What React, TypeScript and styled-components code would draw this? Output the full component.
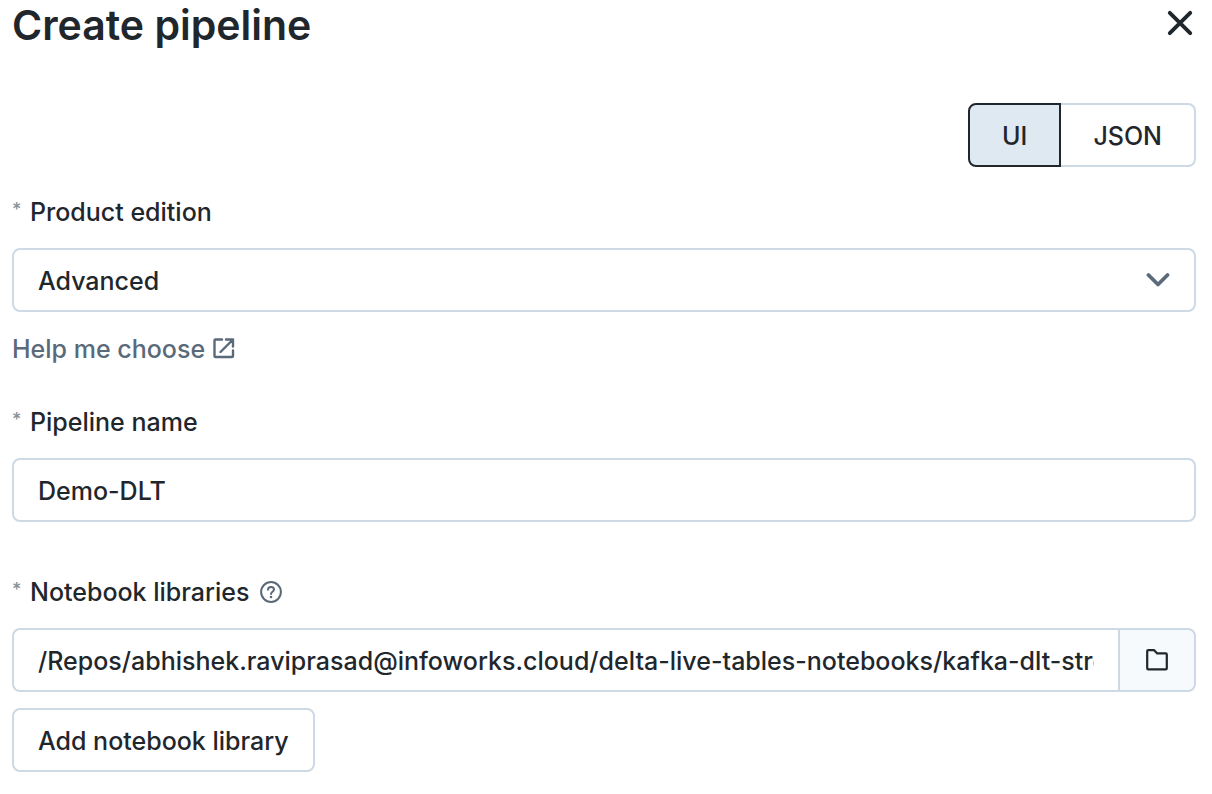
import React from "react";
import styled, { createGlobalStyle, css } from "styled-components";

const ink = "#1f272d";
const muted = "#5a6a7a";
const line = "#cddae5";

const GlobalStyle = createGlobalStyle`
  *, *::before, *::after { box-sizing: border-box; }
  body {
    margin: 0;
    background: #fff;
    color: ${ink};
    font: 500 25px/32px Inter, "Liberation Sans", sans-serif;
  }
  button, input, select { font: inherit; color: inherit; }
`;

const Dialog = styled.main`
  padding: 0 16px 22px 12px;
`;

const Header = styled.header`
  display: flex;
  align-items: flex-start;
  justify-content: space-between;
  height: 103px;
`;

const Title = styled.h1`
  margin: 0;
  font-size: 41px;
  font-weight: 600;
  line-height: 50px;
`;

const CloseButton = styled.button`
  display: flex;
  align-items: center;
  justify-content: center;
  width: 32px;
  height: 46px;
  padding: 0;
  border: 0;
  background: none;
  cursor: pointer;
`;

const Toggle = styled.div`
  display: flex;
  justify-content: flex-end;
  margin-bottom: 29px;
`;

const box = css`
  height: 64px;
  border: 2px solid ${line};
  border-radius: 8px;
  background: #fff;
`;

const ToggleButton = styled.button<{ $selected?: boolean }>`
  ${box}
  padding: 2px 32px 0;
  cursor: pointer;
  ${({ $selected }) =>
    $selected
      ? css`
          border-color: ${ink};
          border-radius: 8px 0 0 8px;
          background: #dfe9f2;
        `
      : css`
          border-left: 0;
          border-radius: 0 8px 8px 0;
        `}
`;

const Field = styled.div<{ $gap?: number }>`
  margin-bottom: ${({ $gap = 0 }) => $gap}px;
`;

const LabelRow = styled.div`
  display: flex;
  align-items: center;
  gap: 10px;
  margin-bottom: 20px;
`;

const Label = styled.label`
  display: flex;
  gap: 8px;
`;

const Required = styled.span`
  width: 10px;
  color: #858f98;
  font-size: 18px;
  line-height: 28px;
`;

const HelpButton = styled.button`
  display: flex;
  padding: 0;
  border: 0;
  background: none;
  color: ${muted};
  cursor: pointer;
`;

const SelectBox = styled.div`
  display: grid;
  align-items: center;

  > * { grid-area: 1 / 1; }
  > svg {
    justify-self: end;
    margin-right: 26px;
    color: ${muted};
    pointer-events: none;
  }
`;

const Select = styled.select`
  ${box}
  width: 100%;
  padding: 2px 24px 0;
  appearance: none;
`;

const HelpLink = styled.a`
  display: inline-flex;
  align-items: center;
  gap: 8px;
  margin-top: 21px;
  color: ${muted};
  text-decoration: none;
`;

const TextInput = styled.input`
  ${box}
  width: 100%;
  padding: 2px 24px 0;
`;

const PathRow = styled.div`
  display: flex;
  margin-bottom: 16px;

  ${TextInput} {
    flex: 1;
    min-width: 0;
    border-right: 0;
    border-radius: 8px 0 0 8px;
  }
`;

const BrowseButton = styled.button`
  ${box}
  display: flex;
  align-items: center;
  justify-content: center;
  width: 78px;
  padding: 0;
  border-radius: 0 8px 8px 0;
  background: #f6fafc;
  cursor: pointer;
`;

const AddButton = styled.button`
  ${box}
  padding: 2px 24px 0;
  cursor: pointer;
`;

const CloseIcon = () => (
  <svg width="26" height="26" viewBox="0 0 26 26" fill="none" stroke="currentColor" strokeWidth="3.9" strokeLinecap="round" aria-hidden="true">
    <path d="M2.8 2.8 23.2 23.2M23.2 2.8 2.8 23.2" />
  </svg>
);

const ChevronIcon = () => (
  <svg width="24" height="16" viewBox="0 0 24 16" fill="none" stroke="currentColor" strokeWidth="3.8" strokeLinecap="round" strokeLinejoin="round" aria-hidden="true">
    <path d="M2.5 3 12 12.5 21.5 3" />
  </svg>
);

const ExternalIcon = () => (
  <svg width="22" height="22" viewBox="0 0 22 22" fill="none" stroke="currentColor" strokeWidth="2.4" strokeLinecap="round" strokeLinejoin="round" aria-hidden="true">
    <path d="M9 1.5H2.6Q1.5 1.5 1.5 2.6V17.9Q1.5 19 2.6 19H18.9Q20 19 20 17.9V12.5M13 1.5H20V8.5M20 1.5 7.5 14" />
  </svg>
);

const HelpIcon = () => (
  <svg width="22" height="22" viewBox="0 0 22 22" fill="none" stroke="currentColor" strokeWidth="2" strokeLinecap="round" strokeLinejoin="round" aria-hidden="true">
    <circle cx="11" cy="11" r="9.9" />
    <path d="M8 8.8C8 6.9 9.3 5.9 11 5.9S14 7 14 8.6C14 10.7 11 10.8 11 13" />
    <circle cx="11" cy="16" r="1.3" fill="currentColor" stroke="none" />
  </svg>
);

const FolderIcon = () => (
  <svg width="22" height="22" viewBox="0 0 22 22" fill="none" stroke="currentColor" strokeWidth="2.2" strokeLinejoin="round" aria-hidden="true">
    <path d="M1.2 2.2Q1.2 1.2 2.2 1.2H8.2L11.2 4.4H19.8Q20.8 4.4 20.8 5.4V19.2Q20.8 20.4 19.8 20.4H2.2Q1.2 20.4 1.2 19.2Z" />
  </svg>
);

export default function App() {
  return (
    <>
      <GlobalStyle />
      <Dialog>
        <Header>
          <Title>Create pipeline</Title>
          <CloseButton type="button" aria-label="Close">
            <CloseIcon />
          </CloseButton>
        </Header>

        <Toggle role="group" aria-label="Editor mode">
          <ToggleButton type="button" $selected aria-pressed="true">UI</ToggleButton>
          <ToggleButton type="button" aria-pressed="false">JSON</ToggleButton>
        </Toggle>

        <Field $gap={41}>
          <LabelRow>
            <Label htmlFor="edition"><Required>*</Required>Product edition</Label>
          </LabelRow>
          <SelectBox>
            <Select id="edition" defaultValue="Advanced">
              <option>Advanced</option>
            </Select>
            <ChevronIcon />
          </SelectBox>
          <HelpLink href="#editions">Help me choose<ExternalIcon /></HelpLink>
        </Field>

        <Field $gap={54}>
          <LabelRow>
            <Label htmlFor="name"><Required>*</Required>Pipeline name</Label>
          </LabelRow>
          <TextInput id="name" defaultValue="Demo-DLT" />
        </Field>

        <Field>
          <LabelRow>
            <Label htmlFor="library"><Required>*</Required>Notebook libraries</Label>
            <HelpButton type="button" aria-label="About notebook libraries"><HelpIcon /></HelpButton>
          </LabelRow>
          <PathRow>
            <TextInput
              id="library"
              defaultValue="/Repos/abhishek.raviprasad@infoworks.cloud/delta-live-tables-notebooks/kafka-dlt-streaming"
            />
            <BrowseButton type="button" aria-label="Browse notebooks"><FolderIcon /></BrowseButton>
          </PathRow>
          <AddButton type="button">Add notebook library</AddButton>
        </Field>
      </Dialog>
    </>
  );
}
